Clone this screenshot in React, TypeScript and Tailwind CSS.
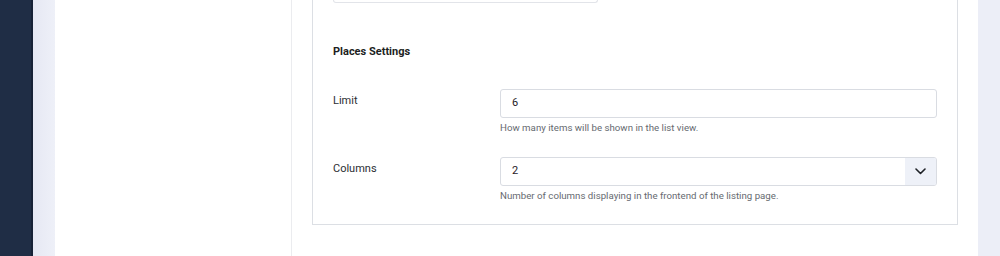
import React from 'react';

export default function App() {
    return (
        <div className="h-[256px] w-[1000px] overflow-hidden flex bg-[#eceef7] font-['Roboto',sans-serif]">
            {/* sidebar */}
            <div className="w-[33px] shrink-0 bg-[#1f2d45] border-r-2 border-[#172236]"></div>
            {/* gutter */}
            <div className="w-[22px] shrink-0 bg-gradient-to-r from-[#e6e8f3] to-[#eef0f8]"></div>

            {/* main panel */}
            <div className="w-[923px] shrink-0 bg-white flex">
                <div className="w-[237px] shrink-0 border-r border-[#ebecef]"></div>

                <div className="flex-1 pl-[20px] pr-[20px]">
                    <div className="w-[646px] border-x border-b border-[#dcdfe4] pl-[20px] pr-[20px] pb-[22px]">
                        {/* previous field (cut off) */}
                        <div className="w-[265px] h-[3px] border-x border-b border-[#e2e4e9] rounded-b-[3px]"></div>

                        <h3 className="mt-[42px] text-[11px] leading-[14px] font-bold text-[#1d1f23]">Places Settings</h3>

                        {/* Limit */}
                        <div className="mt-[30px] flex">
                            <label className="w-[167px] shrink-0 pt-[5px] text-[11px] leading-[14px] text-[#2b2e33]">Limit</label>
                            <div className="flex-1">
                                <div className="h-[29px] rounded-[3px] border border-[#d9dce2] flex items-center px-[11px] text-[11px] text-[#1f2227]">6</div>
                                <p className="mt-[4px] text-[9.7px] leading-[12px] text-[#666a70]">How many items will be shown in the list view.</p>
                            </div>
                        </div>

                        {/* Columns */}
                        <div className="mt-[23px] flex">
                            <label className="w-[167px] shrink-0 pt-[5px] text-[11px] leading-[14px] text-[#2b2e33]">Columns</label>
                            <div className="flex-1">
                                <div className="h-[29px] rounded-[3px] border border-[#d9dce2] flex items-center overflow-hidden">
                                    <span className="flex-1 px-[11px] text-[11px] text-[#1f2227]">2</span>
                                    <span className="w-[31px] h-full bg-[#eef1f8] flex items-center justify-center">
                                        <svg width="11" height="7" viewBox="0 0 11 7" fill="none">
                                            <path d="M1 1l4.5 4.5L10 1" stroke="#1f2227" strokeWidth="1.6" strokeLinecap="round" strokeLinejoin="round" />
                                        </svg>
                                    </span>
                                </div>
                                <p className="mt-[4px] text-[9.7px] leading-[12px] text-[#666a70]">Number of columns displaying in the frontend of the listing page.</p>
                            </div>
                        </div>
                    </div>
                </div>
            </div>
        </div>
    );
}
